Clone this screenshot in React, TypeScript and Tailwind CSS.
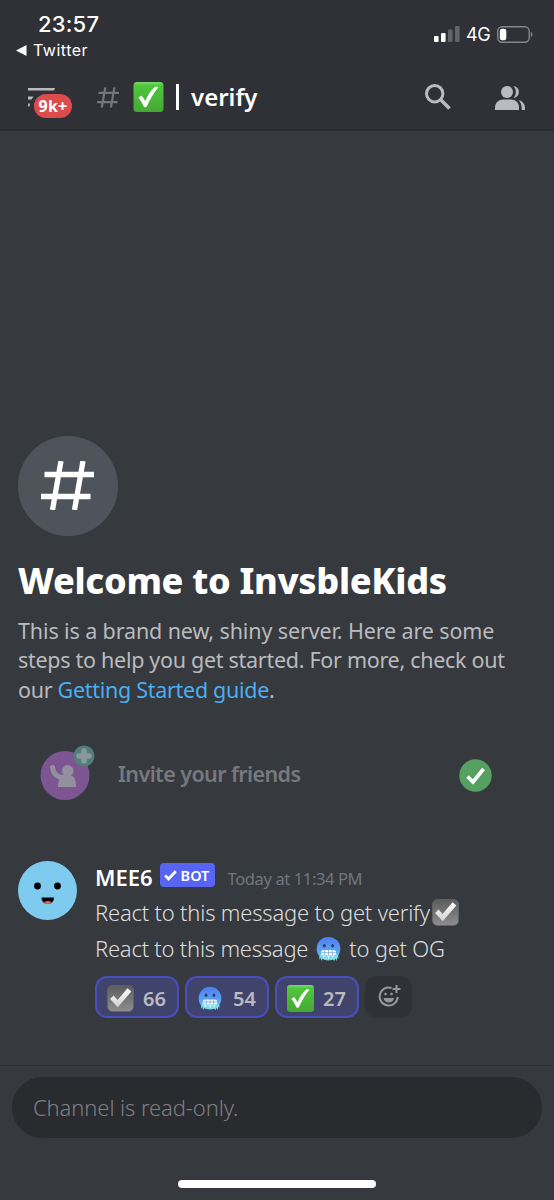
import { ReactNode } from "react";

const CHECK = "M5 14.5l5.6 6.2L23 7.6";

function Hash({ className }: Readonly<{ className: string }>) {
	return (
		<svg viewBox="0 0 53 49" className={className} fill="none" stroke="currentColor" strokeWidth="5.300">
			<path d="M3.500 13.500H53M0 35.500h49.500M20 0l-8.500 49M42 0l-8.500 49" />
		</svg>
	);
}

function GreenCheck({ className }: Readonly<{ className: string }>) {
	return (
		<svg viewBox="0 0 30 30" className={className}>
			<defs>
				<linearGradient id="green" x1="0" y1="0" x2="0" y2="1">
					<stop offset="0" stopColor="#79dc6c" />
					<stop offset="0.12" stopColor="#4fc63c" />
					<stop offset="1" stopColor="#45a834" />
				</linearGradient>
			</defs>
			<rect width="30" height="30" rx="3.5" fill="url(#green)" />
			<path d="M5.3 15.4l2.700-1.400c1.600 1.800 2.700 3.700 3.700 6C14 14 17.200 9 21.500 5.200h3C19.800 11 16 17.500 12.800 24.800h-2C9.200 21.200 7.500 18.200 5.300 15.400z" fill="#fff" stroke="#fff" strokeWidth="0.700" />
		</svg>
	);
}

function GrayCheck({ className }: Readonly<{ className: string }>) {
	return (
		<svg viewBox="0 0 28 28" className={className}>
			<defs>
				<linearGradient id="gray" x1="0" y1="0" x2="0" y2="1">
					<stop offset="0" stopColor="#5c5c5c" />
					<stop offset="1" stopColor="#8e8e8e" />
				</linearGradient>
				<linearGradient id="silver" x1="0" y1="0" x2="0" y2="1">
					<stop offset="0" stopColor="#ffffff" />
					<stop offset="1" stopColor="#d0d0d2" />
				</linearGradient>
			</defs>
			<rect x="0.5" y="0.5" width="27" height="27" rx="5" fill="url(#gray)" stroke="#626262" />
			<path d="M3.200 14.500l3.600-3.500 4.200 4.600L21.300 3.400l3.900 3.400L11.200 23.200z" fill="url(#silver)" />
		</svg>
	);
}

function ColdFace({ className }: Readonly<{ className: string }>) {
	return (
		<svg viewBox="0 0 26 26" className={className}>
			<defs>
				<linearGradient id="cold" x1="0" y1="0" x2="0" y2="1">
					<stop offset="0" stopColor="#4f7df0" />
					<stop offset="0.5" stopColor="#5a9cf0" />
					<stop offset="1" stopColor="#62d0ee" />
				</linearGradient>
			</defs>
			<circle cx="13" cy="12.700" r="12.300" fill="url(#cold)" />
			<path d="M5.500 17.500L3.500 20.500v4l1.200-2.500 1 3.500 1.300-3 1.200 1.500h9.500l1.300 1.500 1.200-2.500 1 2.500 1.200-4 .8 2v-3.500l-2.500-2.500z" fill="#7fdcec" />
			<ellipse cx="8.700" cy="9.600" rx="1.500" ry="1.900" fill="#2d3a72" />
			<ellipse cx="17.300" cy="9.600" rx="1.500" ry="1.900" fill="#2d3a72" />
			<rect x="5.200" y="14" width="15.600" height="5.600" rx="2.600" fill="#f4f8fb" />
			<path d="M5.500 16.800h15M9 14v5.600M13 14v5.600M17 14v5.600" stroke="#6f9fc8" strokeWidth="0.700" />
			<path d="M7 20l.8 3 1.200-3M12 20l1 4 1.200-4M16.500 20l1 3 1-3" fill="#dff8fc" />
		</svg>
	);
}

function StatusBar() {
	return (
		<div className="flex h-[65px] justify-between pl-4 pr-[21px] font-['Inter','Liberation_Sans',sans-serif] text-white">
			<div className="flex flex-col pt-3">
				<span className="pl-[22px] text-[22px] leading-6 font-medium tracking-[0.2px]">23:57</span>
				<span className="flex h-7 items-center gap-[6px] text-[16px] tracking-[0.5px]">
					<svg viewBox="0 0 11 11" className="h-[11px] w-[11px]" fill="currentColor">
						<path d="M0 5.500L10.500 0v11z" />
					</svg>
					Twitter
				</span>
			</div>
			<div className="flex h-[68px] items-center gap-[6px]">
				<svg viewBox="0 0 26 16" className="h-4 w-[26px]" fill="currentColor">
					<rect x="0" y="10" width="4.600" height="6" rx="1" />
					<rect x="7" y="7" width="4.600" height="9" rx="1" />
					<rect x="14" y="3.500" width="4.600" height="12.500" rx="1" opacity="0.250" />
					<rect x="21" y="0" width="4.600" height="16" rx="1" opacity="0.250" />
				</svg>
				<span className="mt-[2px] w-[25px] text-[18px] leading-5 tracking-[-0.3px]">4G</span>
				<svg viewBox="0 0 36 17" className="h-[17px] w-9">
					<rect x="0.700" y="0.700" width="31.500" height="15.600" rx="4.500" fill="none" stroke="#85868a" strokeWidth="1.400" />
					<rect x="2.800" y="2.800" width="6.500" height="11.400" rx="2.200" fill="#fff" />
					<path d="M33.800 5.500q3.400 3 0 6z" fill="#85868a" />
				</svg>
			</div>
		</div>
	);
}

function ChannelHeader() {
	return (
		<div className="flex h-16 items-center pr-[29px] pl-7">
			<div className="relative h-8 w-[44px] text-[#b9bbbe]">
				<svg viewBox="0 0 28 20" className="mt-[7px] h-5 w-7" fill="currentColor">
					<path d="M0 0h27l-1 2.600H0zM0 8.500h5.500l-2 3H0zM0 15.500h2l-.5 3H0z" />
				</svg>
				<span className="absolute top-[13px] left-[6px] flex h-6 w-[38px] items-center justify-center rounded-full bg-[#dc4c4c] text-[16px] font-bold tracking-[0.3px] text-white">9k+</span>
			</div>
			<Hash className="ml-[25px] h-[21px] w-[22px] text-[#72767d]" />
			<GreenCheck className="ml-[14px] h-[30px] w-[31px]" />
			<span className="ml-[12px] h-[26px] w-[3px] bg-white" />
			<span className="ml-3 text-[24px] leading-8 font-semibold text-white">verify</span>
			<svg viewBox="0 0 26 26" className="ml-auto h-[26px] w-[26px] text-[#b9bbbe]" fill="none" stroke="currentColor">
				<circle cx="9.700" cy="9.700" r="8.200" strokeWidth="3" />
				<path d="M15.500 15.500l9 9" strokeWidth="3.600" />
			</svg>
			<svg viewBox="0 0 30 24" className="mt-[2px] ml-[44px] h-6 w-[30px] text-[#b9bbbe]" fill="currentColor">
				<circle cx="12" cy="6" r="6" />
				<path d="M0 24v-2.500C0 16.500 4 13.500 8 13.500h8c4.500 0 8 3 8 8V24z" />
				<path d="M18.500 0c7.200.5 7.200 11.500 0 12 3.200-3.500 3.200-8.500 0-12zM23.500 14c4 1 6.500 4 6.500 8v2h-3.200c0-4.500-.8-7.500-3.300-10z" />
			</svg>
		</div>
	);
}

function Reaction({ count, children }: Readonly<{ count: number, children: ReactNode }>) {
	return (
		<button className="flex h-[42px] w-[84px] items-center justify-between rounded-xl border-2 border-[#484fbc] bg-[#40436b] pt-[3px] pr-[11px] pl-[10px] text-[20px] font-semibold text-[#b9bbbe]">
			{children}
			{count}
		</button>
	);
}

function Welcome() {
	return (
		<section className="pl-[18px]">
			<div className="flex h-[100px] w-[100px] items-center justify-center rounded-full bg-[#4f545c] pr-[2px] text-white">
				<Hash className="h-[49px] w-[53px]" />
			</div>
			<h1 className="mt-[21px] text-[36px] leading-[48px] font-extrabold tracking-[-0.3px] whitespace-nowrap text-white">Welcome to InvsbleKids</h1>
			<p className="mt-[11px] text-[21.500px] leading-[29.500px] tracking-[-0.290px] whitespace-nowrap text-[#b9bbbe]">
				<span className="tracking-[-0.120px]">This is a brand new, shiny server. Here are some</span><br />
				steps to help you get started. For more, check out<br />
				our <a className="text-[#49aff0]">Getting Started guide</a>.
			</p>
		</section>
	);
}

function InviteRow() {
	return (
		<div className="mt-[41px] flex h-[56px] items-center pr-[62px] pl-10">
			<svg viewBox="0 0 56 56" className="h-14 w-14">
				<circle cx="25" cy="30.500" r="24.500" fill="#7d5590" />
				<path d="M10 21.500c1.500-2 4-2 5 0 .3 4 2 7 5.500 8 1 .4 2 .5 3 .3a5.800 5.800 0 1 1 7.500.8c4 1.500 5 5 5 11.400H18c0-3.500.5-6 1.500-7.500-6-2-9-6-9.500-13z" fill="#948f9e" />
				<circle cx="44" cy="11" r="10.500" fill="#507f7b" />
				<path d="M44 6v10M39 11h10" stroke="#8b9899" strokeWidth="5.500" strokeLinecap="round" />
			</svg>
			<span className="mt-[2px] ml-[22px] text-[21.500px] font-semibold tracking-[-0.600px] text-[#76797e]">Invite your friends</span>
			<svg viewBox="0 0 33 33" className="mt-[5px] ml-auto h-[33px] w-[33px]">
				<circle cx="16.500" cy="16.500" r="16.200" fill="#56a162" />
				<path d="M8.500 17.500l5.500 5.500L24.500 10" fill="none" stroke="#fff" strokeWidth="3.600" />
			</svg>
		</div>
	);
}

function Message() {
	return (
		<article className="mt-[60px] flex pl-[18px]">
			<svg viewBox="0 0 59 59" className="h-[59px] w-[59px]">
				<circle cx="29.500" cy="29.500" r="29.500" fill="#7fcbf0" />
				<circle cx="19.500" cy="25" r="3.400" />
				<circle cx="39.500" cy="25" r="3.400" />
				<path d="M23.500 36.500h12.500c0 4-2.500 6.500-6.200 6.500s-6.300-2.500-6.300-6.500z" />
				<path d="M25.800 41.500c2-2 6-2 8 0-2 2-6 2-8 0z" fill="#d8605c" />
			</svg>
			<div className="ml-[18px]">
				<div className="flex h-[33px] items-center">
					<span className="text-[22px] font-semibold text-white">MEE6</span>
					<span className="ml-[7px] mb-[6px] flex h-6 w-[55px] items-center gap-1 rounded-[4px] bg-[#5865f2] pl-1 text-[14.500px] leading-5 font-semibold text-white">
						<svg viewBox="3 4 22 20" className="h-[12px] w-[13px]" fill="none" stroke="currentColor" strokeWidth="4.500">
							<path d={CHECK} />
						</svg>
						BOT
					</span>
					<span className="ml-[13px] mt-[3px] text-[16.500px] tracking-[-0.380px] text-[#72767d]">Today at 11:34 PM</span>
				</div>
				<div className="text-[22px] font-light text-[#dcddde]">
					<p className="flex h-9 items-center tracking-[-0.210px] whitespace-nowrap">
						React to this message to get verify<GrayCheck className="ml-[2px] h-[27px] w-[27px]" />
					</p>
					<p className="flex h-[37px] items-center tracking-[-0.240px] whitespace-nowrap">
						React to this message<ColdFace className="mx-[8px] h-[26px] w-[25px]" />to get OG
					</p>
				</div>
				<div className="mt-[9px] flex gap-[6px]">
					<Reaction count={66}><GrayCheck className="h-[27px] w-[27px]" /></Reaction>
					<Reaction count={54}><ColdFace className="ml-[1px] h-[25px] w-6" /></Reaction>
					<Reaction count={27}><GreenCheck className="h-[27px] w-[27px]" /></Reaction>
					<button className="flex h-[42px] w-[47px] items-center justify-center rounded-xl bg-[#2f3136] text-[#96989c]">
						<svg viewBox="0 0 24 24" className="mb-[2px] ml-[2px] h-6 w-6" fill="none" stroke="currentColor" strokeWidth="2">
							<path d="M13.500 4a9 9 0 1 0 6.200 9M18.500 1v8M14.500 5h8" />
							<circle cx="7.500" cy="10" r="1.300" fill="currentColor" stroke="none" />
							<circle cx="13.500" cy="10" r="1.300" fill="currentColor" stroke="none" />
							<path d="M5.500 14h10.500c-.5 3-2.500 4.500-5.200 4.500S6 17 5.500 14z" fill="currentColor" stroke="none" />
						</svg>
					</button>
				</div>
			</div>
		</article>
	);
}

export default function App() {
	return (
		<div className="flex h-[1200px] w-[554px] flex-col overflow-hidden bg-[#36393e] font-['Noto_Sans','Open_Sans',sans-serif]">
			<header className="h-[131px] shrink-0 border-b-2 border-[#292b2f] bg-[#303136]">
				<StatusBar />
				<ChannelHeader />
			</header>
			<main className="flex flex-1 flex-col pt-[304.500px]">
				<Welcome />
				<InviteRow />
				<Message />
			</main>
			<footer className="h-[135px] shrink-0 border-t border-[#2f3136] px-3 pt-[11px]">
				<div className="flex h-[61px] items-center rounded-full bg-[#2a2b2f] pl-[21px] text-[22px] font-light tracking-[-0.100px] text-[#7c7f85]">Channel is read-only.</div>
				<div className="mx-auto mt-[42px] h-2 w-[198px] rounded-full bg-white" />
			</footer>
		</div>
	);
}
